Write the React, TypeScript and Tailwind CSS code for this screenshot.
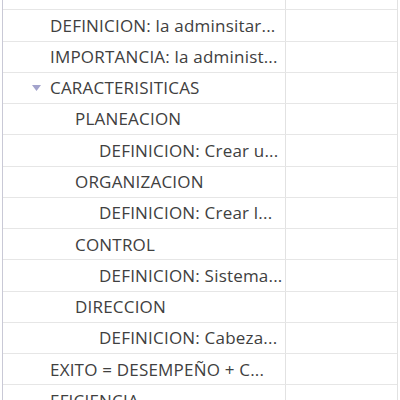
import React from 'react'

type Row = {
  text: string
  level: number
  expanded?: boolean
}

const rows: Row[] = [
  { text: 'ADMINISTRACION', level: 0, expanded: true },
  { text: 'DEFINICION: la adminsitar...', level: 1 },
  { text: 'IMPORTANCIA: la administ...', level: 1 },
  { text: 'CARACTERISITICAS', level: 1, expanded: true },
  { text: 'PLANEACION', level: 2 },
  { text: 'DEFINICION: Crear u...', level: 3 },
  { text: 'ORGANIZACION', level: 2 },
  { text: 'DEFINICION: Crear l...', level: 3 },
  { text: 'CONTROL', level: 2 },
  { text: 'DEFINICION: Sistema...', level: 3 },
  { text: 'DIRECCION', level: 2 },
  { text: 'DEFINICION: Cabeza...', level: 3 },
  { text: 'EXITO = DESEMPEÑO + C...', level: 1 },
  { text: 'EFICIENCIA', level: 1 },
]

const indent = ['pl-[22px]', 'pl-[47px]', 'pl-[72px]', 'pl-[96px]']
const caret = ['left-[4px]', 'left-[29px]', 'left-[54px]', 'left-[78px]']

export default function App() {
  return (
    <div className="w-[400px] h-[400px] overflow-hidden bg-white">
      <div className="-mt-[21px] ml-[2px] w-[396px] border-l border-r border-l-[#c9c9d6] border-r-[#e2e2e2]">
        {rows.map((row, i) => (
          <div key={i} className="flex h-[31.27px] border-b border-[#e6e6e6]">
            <div
              className={`relative w-[283px] flex items-center border-r border-[#e2e2e2] ${indent[row.level]}`}
            >
              {row.expanded && (
                <svg
                  className={`absolute top-1/2 -translate-y-1/2 ${caret[row.level]}`}
                  width="9"
                  height="6"
                  viewBox="0 0 9 6"
                >
                  <path d="M0 0 L9 0 L4.5 6 Z" fill="#a3a3cc" />
                </svg>
              )}
              <span className="whitespace-nowrap text-[17px] text-[#404040] font-['Open_Sans',sans-serif] tracking-[0.2px]">
                {row.text}
              </span>
            </div>
            <div className="flex-1" />
          </div>
        ))}
      </div>
    </div>
  )
}
